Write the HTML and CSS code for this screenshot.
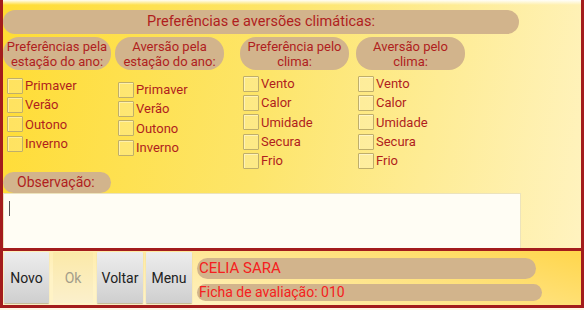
FILE: index.html
```html
<!DOCTYPE html>
<html lang="pt">

<head>
  <meta charset="UTF-8" />
  <meta name="viewport" content="width=device-width, initial-scale=1.0" />
  <title>Preferências e aversões climáticas</title>
  <link rel="stylesheet" href="styles.css">
</head>

<body>
  <div class="main">
    <div class="title">Preferências e aversões climáticas:</div>

    <div class="cols">
      <div class="col col-1">
        <div class="head">Preferências pela<br>estação do ano:</div>
        <div class="list list-a">
          <label class="item"><span class="box"></span>Primaver</label>
          <label class="item"><span class="box"></span>Verão</label>
          <label class="item"><span class="box"></span>Outono</label>
          <label class="item"><span class="box"></span>Inverno</label>
        </div>
      </div>

      <div class="col col-2">
        <div class="head">Aversão pela<br>estação do ano:</div>
        <div class="list list-b">
          <label class="item"><span class="box"></span>Primaver</label>
          <label class="item"><span class="box"></span>Verão</label>
          <label class="item"><span class="box"></span>Outono</label>
          <label class="item"><span class="box"></span>Inverno</label>
        </div>
      </div>

      <div class="col col-3">
        <div class="head">Preferência pelo<br>clima:</div>
        <div class="list">
          <label class="item"><span class="box"></span>Vento</label>
          <label class="item"><span class="box"></span>Calor</label>
          <label class="item"><span class="box"></span>Umidade</label>
          <label class="item"><span class="box"></span>Secura</label>
          <label class="item"><span class="box"></span>Frio</label>
        </div>
      </div>

      <div class="col col-4">
        <div class="head">Aversão pelo<br>clima:</div>
        <div class="list">
          <label class="item"><span class="box"></span>Vento</label>
          <label class="item"><span class="box"></span>Calor</label>
          <label class="item"><span class="box"></span>Umidade</label>
          <label class="item"><span class="box"></span>Secura</label>
          <label class="item"><span class="box"></span>Frio</label>
        </div>
      </div>
    </div>

    <div class="obs-label">Observação:</div>
    <div class="obs"><span class="cursor"></span></div>
  </div>

  <div class="footer">
    <button class="btn">Novo</button>
    <button class="btn btn-off">Ok</button>
    <button class="btn">Voltar</button>
    <button class="btn">Menu</button>
    <div class="info">
      <div class="name">CELIA SARA</div>
      <div class="ficha">Ficha de avaliação: 010</div>
    </div>
  </div>
</body>

</html>
```
FILE: styles.css
```css
* {
  box-sizing: border-box;
  margin: 0;
  padding: 0;
}

body {
  font-family: Roboto, 'Noto Sans', sans-serif;
  background: #fff8e6;
  width: 584px;
  height: 310px;
  overflow: hidden;
}

.main {
  height: 248px;
  border-left: 3px solid #a31c1c;
  border-right: 3px solid #a31c1c;
  background:
    linear-gradient(to bottom, rgba(255, 255, 255, 0.95), rgba(255, 255, 255, 0) 5px),
    linear-gradient(100deg, #ffdc34 0%, #fde56a 45%, #fff3c0 100%);
  padding-top: 10px;
}

.title {
  width: 516px;
  height: 24px;
  border-radius: 12px;
  background: #d2b48c;
  color: #b01e1e;
  font-size: 14.5px;
  line-height: 24px;
  text-align: center;
  margin-bottom: 3px;
}

.cols {
  display: grid;
  grid-template-columns: 112px 125px 116px 109px;
  height: 135px;
}

.head {
  width: 108px;
  height: 33px;
  border-radius: 16px;
  background: #d2b48c;
  color: #b01e1e;
  font-size: 13px;
  line-height: 15px;
  padding-top: 2px;
  text-align: center;
}

.col-2 .head,
.col-3 .head,
.col-4 .head {
  width: 109px;
}

.list {
  padding: 4px 0 0 3px;
}

.list-a {
  padding: 6px 0 0 4px;
}

.list-b {
  padding-top: 10px;
}

.col-4 .list {
  padding-left: 2px;
}

.item {
  display: flex;
  align-items: center;
  gap: 2px;
  height: 19.3px;
  color: #b01e1e;
  font-size: 13px;
}

.box {
  width: 16px;
  height: 16px;
  border: 1px solid #bfae6a;
  border-radius: 1px;
  background: rgba(255, 255, 255, 0.2);
  box-shadow: inset 1px 1px 0 rgba(255, 255, 255, 0.4);
}

.obs-label {
  width: 108px;
  height: 21px;
  border-radius: 11px;
  background: #d2b48c;
  color: #b01e1e;
  font-size: 14px;
  line-height: 21px;
  padding-left: 14px;
}

.obs {
  width: 518px;
  height: 55px;
  background: #fffdf4;
  border: 1px solid #ece3bc;
  border-bottom: none;
  padding: 7px 0 0 5px;
}

.cursor {
  display: block;
  width: 1px;
  height: 15px;
  background: #555;
}

.footer {
  height: 60px;
  border: 3px solid #a31c1c;
  background: linear-gradient(195deg, #ffd64c, #fff3c6 80%);
  display: flex;
  align-items: flex-start;
  padding: 1px 0 0 1px;
}

.btn {
  width: 45px;
  height: 51px;
  margin-right: 4px;
  border: none;
  border-radius: 1px;
  background: linear-gradient(to bottom, #ededed, #cfcfcf);
  box-shadow: 0 1px 1px rgba(0, 0, 0, 0.25);
  font-family: Roboto, 'Noto Sans', sans-serif;
  font-size: 14px;
  color: #222;
}

.btn-off {
  width: 40px;
  background: linear-gradient(to bottom, #fbe9a8, #fbf0cc);
  box-shadow: none;
  color: #a39d8a;
}

.btn:nth-child(3),
.btn:nth-child(4) {
  width: 46px;
}

.btn:nth-child(3) {
  margin-right: 3px;
}

.btn:nth-child(4) {
  margin-right: 5px;
}

.info {
  padding-top: 6px;
}

.name {
  width: 339px;
  height: 21px;
  border-radius: 11px;
  background: #d2b48c;
  color: #f52020;
  font-size: 15px;
  line-height: 21px;
  padding-left: 2px;
  margin-bottom: 5px;
}

.ficha {
  width: 345px;
  height: 17px;
  border-radius: 9px;
  background: #d2b48c;
  color: #f52020;
  font-size: 14px;
  line-height: 17px;
  padding-left: 2px;
}
```
